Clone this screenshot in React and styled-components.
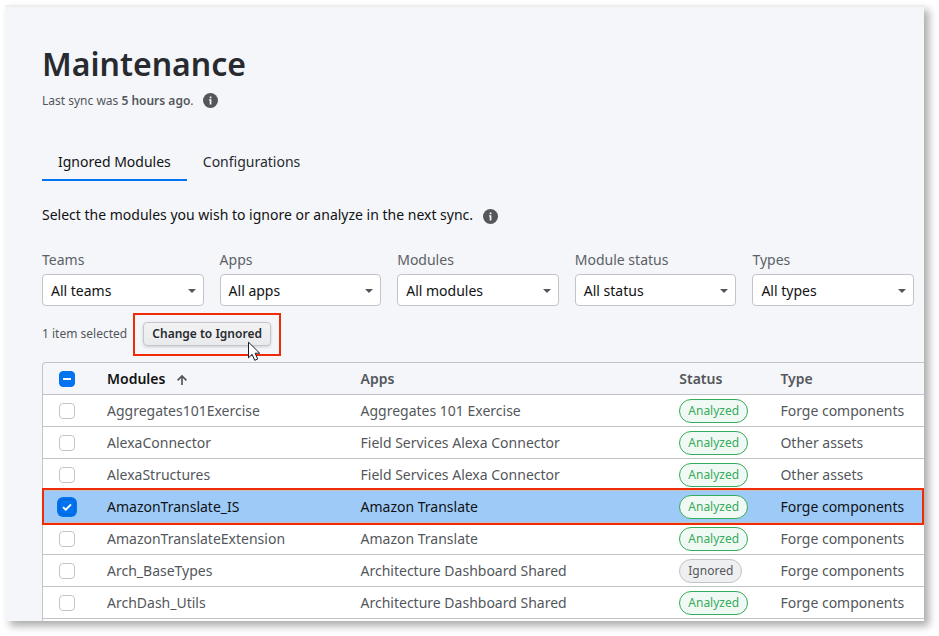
import React from 'react';
import styled, { createGlobalStyle, css } from 'styled-components';

const GlobalStyle = createGlobalStyle`
  *, *::before, *::after { box-sizing: border-box; }
  html, body { margin: 0; background: #fff; }
  body { font-family: "Noto Sans", sans-serif; font-size: 14px; line-height: 20px; color: #272b30; overflow: hidden; }
`;

const Stage = styled.div`
  height: 636px;
  padding: 5px 15px 15px 5px;
`;

const Panel = styled.main`
  width: 919px;
  height: 616px;
  padding: 35px 0 0 37px;
  background: linear-gradient(#e9eaec 0, #f2f3f5 2px, #f5f6f9 5px);
  box-shadow: 5px 5px 8px 0 rgba(0, 0, 0, 0.33);
`;

const Clip = styled.div`
  height: 581px;
  overflow: hidden;
`;

const Title = styled.h1`
  margin: 0;
  font-size: 32px;
  line-height: 48px;
  font-weight: 600;
`;

const Sync = styled.div`
  display: flex;
  align-items: center;
  gap: 9px;
  height: 20px;
  margin-top: 3px;
  font-size: 12px;
  color: #53575b;
  strong { font-weight: 600; }
  svg { margin-bottom: 1px; }
`;

const Tabs = styled.nav`
  display: flex;
  height: 38px;
  margin-top: 32px;
`;

const Tab = styled.a`
  padding: 9px 16px 0;
  border-bottom: 2px solid ${(p) => (p.$active ? '#0073f0' : 'transparent')};
  color: ${(p) => (p.$active ? '#101213' : '#272b30')};
`;

const Instruction = styled.div`
  display: flex;
  align-items: center;
  gap: 9.5px;
  height: 20px;
  margin-top: 24px;
  color: #101213;
  svg { margin-top: 2px; }
`;

const Filters = styled.div`
  display: grid;
  grid-template-columns: repeat(5, 1fr);
  gap: 16px;
  width: 872px;
  margin-top: 25px;
`;

const Field = styled.label`
  display: flex;
  flex-direction: column;
  gap: 4px;
  color: #5b6167;
`;

const Select = styled.span`
  display: flex;
  align-items: center;
  justify-content: space-between;
  height: 32px;
  padding: 1px 7px 0 8px;
  border: 1px solid #c3c4c9;
  border-radius: 4px;
  background: #fff;
  color: #101213;
`;

const Selection = styled.div`
  display: flex;
  align-items: flex-start;
  gap: 6px;
  height: 43px;
  margin-top: 7px;
  font-size: 12px;
  color: #53575b;
`;

const Count = styled.span`
  padding-top: 11px;
`;

const ButtonMark = styled.div`
  position: relative;
  width: 148px;
  height: 43px;
  padding: 7px 8px;
  border: 2px solid #f02c08;
`;

const Button = styled.button`
  display: block;
  width: 128px;
  height: 24px;
  padding: 0;
  border: 1px solid #c3c5ca;
  border-radius: 4px;
  background: linear-gradient(#f3f3f4, #e9eaec);
  box-shadow: 0 1px 3px rgba(60, 65, 75, 0.22);
  font: 600 12px/20px "Noto Sans", sans-serif;
  color: #272b30;
`;

const Cursor = styled.svg`
  position: absolute;
  left: 112px;
  top: 26px;
`;

const Table = styled.div`
  margin-top: 6px;
  border: 1px solid #c3c4c9;
  border-right: 0;
  border-bottom: 0;
  border-radius: 4px 0 0 0;
`;

const Row = styled.div`
  position: relative;
  display: grid;
  grid-template-columns: 64px 253.5px 318.8px 101.1px 1fr;
  align-items: center;
  height: 32px;
  border-bottom: 1px solid #c1c3c7;
  background: #fff;
  color: #53575b;
  ${(p) => p.$selected && css`
    background: #9ecaf8;
    color: #101213;
    &::after {
      content: "";
      position: absolute;
      inset: -3px 0 -3px -1px;
      border: 2px solid #f02c08;
      z-index: 1;
    }
  `}
`;

const HeaderRow = styled(Row)`
  background: transparent;
  font-weight: 600;
`;

const HeadCell = styled.span`
  display: flex;
  align-items: center;
  gap: 10.5px;
  color: ${(p) => (p.$sorted ? '#101213' : '#53575b')};
  svg { margin-top: 2px; }
`;

const Check = styled.span`
  display: flex;
  align-items: center;
  justify-content: center;
  width: 16px;
  height: 16px;
  margin-left: 16px;
  border: 1px solid ${(p) => (p.$on ? (p.$focus ? '#0a62d2' : '#0073f0') : '#c3c4c9')};
  border-radius: 4px;
  background: ${(p) => (p.$on ? '#0073f0' : '#fff')};
  box-shadow: ${(p) => (p.$focus ? '0 0 0 2px #0073f0' : 'none')};
`;

const Badge = styled.span`
  display: inline-flex;
  align-items: center;
  justify-self: start;
  height: 24px;
  padding: 0 8px;
  border: 1px solid ${(p) => (p.$ignored ? '#c3c4c9' : '#35ab5c')};
  border-radius: 12px;
  background: ${(p) => (p.$ignored ? '#eeeff1' : '#f1f9f4')};
  color: ${(p) => (p.$ignored ? '#53575b' : '#35ab5c')};
  font-size: 12px;
`;

const InfoIcon = () => (
  <svg width="15" height="15" viewBox="0 0 15 15">
    <circle cx="7.5" cy="7.5" r="7.5" fill="#53575b" />
    <path d="M6.7 3.6h1.7v1.7H6.7zM6 6.3h2.4v5.1H6.7V7.5H6z" fill="#f5f6f9" />
  </svg>
);

const Caret = () => (
  <svg width="8" height="4" viewBox="0 0 8 4">
    <path d="M0 0h8L4 4z" fill="#53575b" />
  </svg>
);

const SortArrow = () => (
  <svg width="12" height="12" viewBox="0 0 12 12" fill="none" stroke="#53575b" strokeWidth="1.7">
    <path d="M6 11V2M1.6 6.3 6 1.9l4.4 4.4" />
  </svg>
);

const Dash = () => (
  <svg width="8" height="2" viewBox="0 0 8 2">
    <path d="M0 0h8v2H0z" fill="#fff" />
  </svg>
);

const Tick = () => (
  <svg width="10" height="8" viewBox="0 0 10 8" fill="none" stroke="#fff" strokeWidth="1.9">
    <path d="M1 4.1 3.8 6.7 9 1.3" />
  </svg>
);

const filters = [
  ['Teams', 'All teams'],
  ['Apps', 'All apps'],
  ['Modules', 'All modules'],
  ['Module status', 'All status'],
  ['Types', 'All types'],
];

const rows = [
  ['Aggregates101Exercise', 'Aggregates 101 Exercise', 'Analyzed', 'Forge components'],
  ['AlexaConnector', 'Field Services Alexa Connector', 'Analyzed', 'Other assets'],
  ['AlexaStructures', 'Field Services Alexa Connector', 'Analyzed', 'Other assets'],
  ['AmazonTranslate_IS', 'Amazon Translate', 'Analyzed', 'Forge components', true],
  ['AmazonTranslateExtension', 'Amazon Translate', 'Analyzed', 'Forge components'],
  ['Arch_BaseTypes', 'Architecture Dashboard Shared', 'Ignored', 'Forge components'],
  ['ArchDash_Utils', 'Architecture Dashboard Shared', 'Analyzed', 'Forge components'],
];

export default function App() {
  return (
    <Stage>
      <GlobalStyle />
      <Panel>
        <Clip>
          <Title>Maintenance</Title>
          <Sync>
            <span>Last sync was <strong>5 hours ago</strong>.</span>
            <InfoIcon />
          </Sync>
          <Tabs>
            <Tab $active>Ignored Modules</Tab>
            <Tab>Configurations</Tab>
          </Tabs>
          <Instruction>
            Select the modules you wish to ignore or analyze in the next sync.
            <InfoIcon />
          </Instruction>
          <Filters>
            {filters.map(([label, value]) => (
              <Field key={label}>
                {label}
                <Select>{value}<Caret /></Select>
              </Field>
            ))}
          </Filters>
          <Selection>
            <Count>1 item selected</Count>
            <ButtonMark>
              <Button>Change to Ignored</Button>
              <Cursor width="16" height="22" viewBox="0 0 16 22">
                <path d="M1.5 1.2v15.6l3.6-3.4 2.6 5.9 3-1.3-2.6-5.8h4.6z" fill="#fff" stroke="#161b2b" />
              </Cursor>
            </ButtonMark>
          </Selection>
          <Table>
            <HeaderRow>
              <Check $on><Dash /></Check>
              <HeadCell $sorted>Modules <SortArrow /></HeadCell>
              <HeadCell>Apps</HeadCell>
              <HeadCell>Status</HeadCell>
              <HeadCell>Type</HeadCell>
            </HeaderRow>
            {rows.map(([name, app, status, type, selected]) => (
              <Row key={name} $selected={selected}>
                <Check $on={selected} $focus={selected}>{selected && <Tick />}</Check>
                <span>{name}</span>
                <span>{app}</span>
                <Badge $ignored={status === 'Ignored'}>{status}</Badge>
                <span>{type}</span>
              </Row>
            ))}
            <Row />
          </Table>
        </Clip>
      </Panel>
    </Stage>
  );
}
